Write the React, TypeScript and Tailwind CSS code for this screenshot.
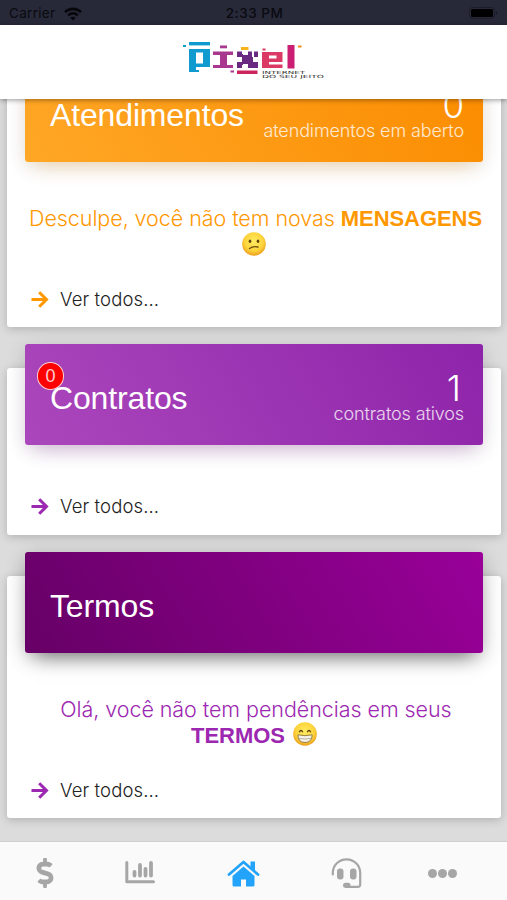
import { FaDollarSign } from "react-icons/fa";

const light = "font-['Inter','Liberation_Sans',sans-serif] font-light";

function Logo() {
    return (
        <svg className="ml-[2px] w-[146px] h-[40px]" viewBox="0 0 146 40">
            <g fill="#0f9bd0">
                <rect x="1" y="5" width="3" height="2" />
                <rect x="7" y="2" width="21" height="3.4" />
                <path fillRule="evenodd" d="M7 9H28V27H14V30H17V32H7ZM14 12.500V23.500H21V12.500Z" />
            </g>
            <g fill="#a9398f">
                <rect x="38" y="5.500" width="7" height="2.800" />
                <path d="M31 11.500H45V25H51V28H31V25H38V15H31Z" />
                <path d="M45 11.500H51V15H45Z" />
                <rect x="48.500" y="30.500" width="3.500" height="2" />
            </g>
            <rect x="59" y="7" width="7.500" height="3" fill="#f8b21b" />
            <path fill="#6b2a82" d="M55 11.500H61V15H66V11.500H76V17H71V22H76V28H66V24H61V28H55V22H60V17H55Z" />
            <path fill="#fff" d="M60 11H66V14H60ZM70 11H72V17H70ZM60 25H66V29H60Z" />
            <rect x="55" y="30.500" width="20.500" height="3.500" fill="#cc245f" />
            <rect x="80.500" y="8.500" width="3" height="2" fill="#dc3a62" />
            <path fill="#dc3a66" fillRule="evenodd" d="M80 12H100.500V22H87V24.500H100.500V28H80ZM87 15.500V18.500H94.500V15.500Z" />
            <rect x="105.500" y="5" width="7" height="23.500" fill="#cb1f73" />
            <rect x="116" y="5.500" width="3.500" height="2" fill="#f08a1d" />
            <g fill="#2c2c2c" fontFamily="DejaVu Sans, sans-serif" fontSize="4.300">
                <text x="80" y="33.500" textLength="43" lengthAdjust="spacingAndGlyphs">INTERNET</text>
                <text x="80" y="38" textLength="62" lengthAdjust="spacingAndGlyphs">DO SEU JEITO</text>
            </g>
        </svg>
    );
}

function Wifi() {
    return (
        <svg className="ml-[9px] w-[18px] h-[14px]" viewBox="0 0 18 14" fill="none" stroke="#07070b" strokeWidth="2.600">
            <path d="M1 5.200C5.500.700 12.500.700 17 5.200" />
            <path d="M4.200 8.400C7 5.700 11 5.700 13.800 8.400" />
            <path d="M9 13.500L6.300 10.800C7.900 9.400 10.100 9.400 11.700 10.800Z" fill="#07070b" stroke="none" />
        </svg>
    );
}

function Arrow({ color }: { color: string }) {
    return (
        <svg className={"w-[18px] h-[17px] " + color} viewBox="0 0 18 17" fill="none" stroke="currentColor" strokeWidth="3">
            <path d="M0.500 8.500H16" />
            <path d="M8.200 1.200L15.500 8.500L8.200 15.800" strokeLinejoin="miter" />
        </svg>
    );
}

function Face({ grin }: { grin?: boolean }) {
    const id = grin ? "grin" : "confused";
    return (
        <svg className="inline-block w-6 h-6 align-top" viewBox="0 0 24 24">
            <defs>
                <radialGradient id={id} cx="50%" cy="40%" r="60%">
                    <stop offset="0" stopColor="#ffec63" />
                    <stop offset="0.650" stopColor="#fdd43b" />
                    <stop offset="1" stopColor="#ec9c1c" />
                </radialGradient>
            </defs>
            <circle cx="12" cy="12" r="11.800" fill={"url(#" + id + ")"} />
            {grin ? (
                <g>
                    <path d="M6.200 10.200Q8 6.800 9.800 10.200M14.200 10.200Q16 6.800 17.800 10.200" fill="none" stroke="#5f4209" strokeWidth="1.300" />
                    <path d="M4.800 12.800Q12 14.600 19.200 12.800Q19 20.500 12 20.500Q5 20.500 4.800 12.800Z" fill="#f4f1e8" stroke="#8d7440" strokeWidth="0.900" />
                    <path d="M5.500 16.300Q12 17.800 18.500 16.300" fill="none" stroke="#aaa18a" strokeWidth="0.800" />
                </g>
            ) : (
                <g>
                    <ellipse cx="8" cy="9.300" rx="1.300" ry="1.700" fill="#5f4209" />
                    <ellipse cx="16" cy="9.300" rx="1.300" ry="1.700" fill="#5f4209" />
                    <path d="M7.500 16.500Q11 13.800 16 15" fill="none" stroke="#6d4c10" strokeWidth="1.300" strokeLinecap="round" />
                </g>
            )}
        </svg>
    );
}

function SeeAll({ color }: { color: string }) {
    return (
        <div className="mt-auto mb-[15px] ml-[6px] flex h-[26px] items-center">
            <Arrow color={color} />
            <span className={light + " ml-[11px] pt-[1px] text-[18.500px] tracking-[0.120px] text-[#222]"}>Ver todos...</span>
        </div>
    );
}

export default function App() {
    return (
        <div className="flex h-[900px] w-[507px] flex-col overflow-hidden bg-[#dcdcdc] font-['Liberation_Sans',sans-serif]">
            <div className="grid h-[25px] shrink-0 grid-cols-3 items-center bg-[#272939] px-[9px] font-['Inter',sans-serif] text-[13.500px] text-[#0a0a0f]">
                <div className="flex items-center pt-[2px]">
                    <span className="tracking-[0.300px]">Carrier</span>
                    <Wifi />
                </div>
                <div className="pt-[2px] pl-[2px] text-center font-medium tracking-[0.500px]">2:33 PM</div>
                <svg className="ml-auto h-[12px] w-[29px]" viewBox="0 0 29 12">
                    <rect x="0.500" y="0.500" width="25" height="11" rx="3" fill="none" stroke="#1b1c28" />
                    <rect x="2" y="2" width="22" height="8" rx="1.500" fill="#000" />
                    <path d="M27 4V8Q28.300 7.300 28.300 6T27 4Z" fill="#1b1c28" />
                </svg>
            </div>

            <div className="z-10 flex h-[73.500px] shrink-0 justify-center bg-white pt-[15px] shadow-[0_1px_5px_rgba(0,0,0,0.4)]">
                <Logo />
            </div>

            <main className="flex-1 overflow-hidden px-[7px]">
                <div className="-mt-[14px] mr-[-1px] flex h-[242.500px] flex-col rounded-[3px] bg-white px-[18px] shadow-[0_2px_10px_rgba(0,0,0,0.2)]">
                    <div className="-mt-6 flex h-[101px] shrink-0 items-center justify-between rounded-[3px] bg-[linear-gradient(60deg,#ffa726,#fb8c00)] pl-[25px] pr-[19px] text-white shadow-[0_12px_20px_-10px_rgba(255,152,0,0.28),0_4px_20px_rgba(0,0,0,0.12)]">
                        <h2 className="pt-[7px] text-[32px] tracking-[-0.150px]">Atendimentos</h2>
                        <div className={light + " pt-[6px] text-right"}>
                            <div className="text-[35px] leading-[34px]">0</div>
                            <div className="text-[18px] leading-[18px] tracking-[-0.120px] text-white/80">atendimentos em aberto</div>
                        </div>
                    </div>
                    <p className={light + " mt-[43px] whitespace-nowrap text-center text-[21.500px] leading-[26px] tracking-[-0.060px] text-[#ff9800]"}>
                        <span className="pl-[3px]">Desculpe, você não tem novas </span>
                        <b className="font-['Liberation_Sans'] text-[22px] font-bold">MENSAGENS</b>
                        <br />
                        <Face />
                    </p>
                    <SeeAll color="text-[#ff9800]" />
                </div>

                <div className="mt-[41px] mr-[-1px] flex h-[166.500px] flex-col rounded-[3px] bg-white px-[18px] shadow-[0_2px_10px_rgba(0,0,0,0.2)]">
                    <div className="relative -mt-6 flex h-[101px] shrink-0 items-center justify-between rounded-[3px] bg-[linear-gradient(60deg,#ab47bc,#8e24aa)] pl-[25px] pr-[19px] text-white shadow-[0_12px_20px_-10px_rgba(156,39,176,0.28),0_4px_20px_rgba(0,0,0,0.14)]">
                        <span className="absolute left-[12px] top-[18px] flex h-[28px] w-[27px] items-center justify-center rounded-full border border-white/80 bg-[#ff0000] text-[18px] text-white/80">0</span>
                        <h2 className="relative pt-[7px] text-[32px] tracking-[-0.150px]">Contratos</h2>
                        <div className={light + " pt-[5px] text-right"}>
                            <div className="pr-[3px] text-[36px] leading-[34px]">1</div>
                            <div className="text-[18px] leading-[18px] tracking-[-0.120px] text-white/80">contratos ativos</div>
                        </div>
                    </div>
                    <SeeAll color="text-[#9c27b0]" />
                </div>

                <div className="mt-[41px] mr-[-1px] flex h-[242.500px] flex-col rounded-[3px] bg-white px-[18px] shadow-[0_2px_10px_rgba(0,0,0,0.2)]">
                    <div className="-mt-6 flex h-[101px] shrink-0 items-center rounded-[3px] bg-[linear-gradient(60deg,#660066,#990099)] pl-[25px] text-white shadow-[0_12px_20px_-10px_rgba(0,0,0,0.5),0_4px_20px_rgba(0,0,0,0.2)]">
                        <h2 className="pt-[7px] text-[32px] tracking-[-0.150px]">Termos</h2>
                    </div>
                    <p className={light + " mt-[43px] whitespace-nowrap text-center text-[21.500px] leading-[26px] tracking-[-0.060px] text-[#9c27b0]"}>
                        <span className="pl-[4px]">Olá, você não tem pendências em seus</span>
                        <br />
                        <b className="mr-[2px] font-['Liberation_Sans'] text-[22px] font-bold">TERMOS</b> <Face grin />
                    </p>
                    <SeeAll color="text-[#9c27b0]" />
                </div>
            </main>

            <nav className="z-10 flex h-[59px] shrink-0 items-start border-t border-[#cfcfcf] bg-[#fafafa] pt-[14px] text-[#a6a6a6]">
                <div className="flex h-[34px] w-[90px] items-center justify-center">
                    <FaDollarSign className="h-[30px] w-[30px]" />
                </div>
                <div className="flex h-[34px] w-[100px] items-center justify-center">
                    <svg className="h-[24px] w-[30px]" viewBox="0 0 30 24" fill="none" stroke="currentColor">
                        <path d="M1.800 1.500V20.800H28.500" strokeWidth="3" strokeLinecap="round" strokeLinejoin="round" />
                        <path d="M9.500 11V14.500M15 4V14.500M20.500 8V14.500M26 2V14.500" strokeWidth="3.800" strokeLinecap="round" />
                    </svg>
                </div>
                <div className="flex h-[34px] w-[106px] items-center justify-center text-[#24a3fb]">
                    <svg className="h-[27px] w-[33px]" viewBox="0 0 33 27" fill="currentColor">
                        <path d="M2 14.500L16.500 2L31 14.500" fill="none" stroke="currentColor" strokeWidth="2.800" strokeLinecap="round" strokeLinejoin="round" />
                        <path d="M23.500 1.500H28V11L23.500 7Z" />
                        <path d="M5.500 16L16.500 6.500L27.500 16V25Q27.500 26.500 26 26.500H19V19.500H14V26.500H7Q5.500 26.500 5.500 25Z" />
                    </svg>
                </div>
                <div className="flex h-[34px] w-[101px] items-center justify-center">
                    <svg className="h-[31px] w-[31px]" viewBox="0 0 31 31" fill="none" stroke="currentColor">
                        <path d="M1.800 16.500V15A13.700 13.700 0 0 1 29.200 15V26.500Q29.200 28.800 26.900 28.800H14.500" strokeWidth="2.200" strokeLinecap="round" />
                        <rect x="6" y="10.500" width="6.500" height="11" rx="3" fill="currentColor" stroke="none" />
                        <rect x="19" y="10.500" width="6.500" height="11" rx="3" fill="currentColor" stroke="none" />
                        <rect x="12" y="24.800" width="7.500" height="5" rx="2.500" fill="currentColor" stroke="none" />
                    </svg>
                </div>
                <div className="flex h-[34px] w-[91px] items-center justify-center gap-[1px]">
                    <span className="h-[9px] w-[9px] rounded-full bg-[#a6a6a6]" />
                    <span className="h-[9px] w-[9px] rounded-full bg-[#a6a6a6]" />
                    <span className="h-[9px] w-[9px] rounded-full bg-[#a6a6a6]" />
                </div>
            </nav>
        </div>
    );
}
